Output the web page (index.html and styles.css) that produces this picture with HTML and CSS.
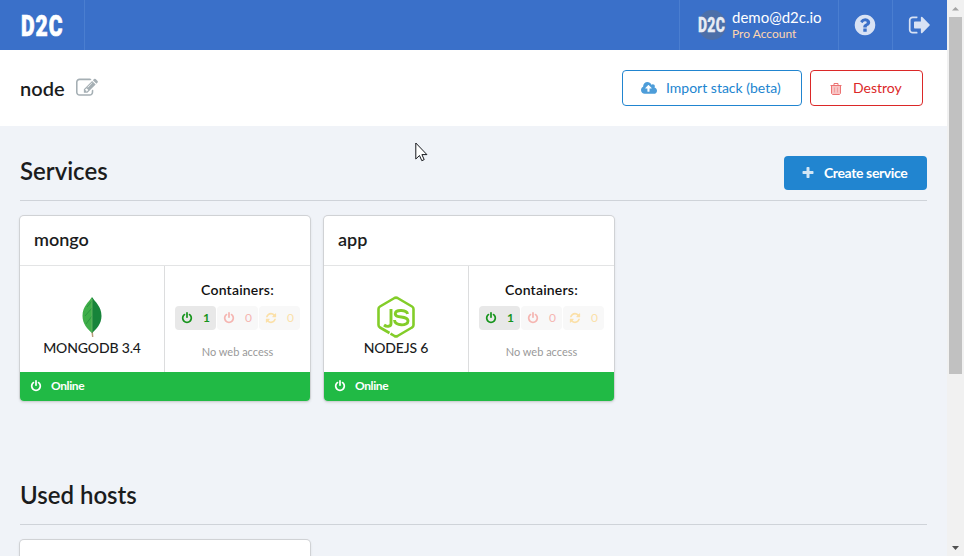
FILE: index.html
```html
<!DOCTYPE html>
<html lang="en">
<head>
<meta charset="utf-8">
<title>node - D2C</title>
<link rel="stylesheet" href="styles.css">
</head>
<body>
<svg class="defs" aria-hidden="true">
  <symbol id="power" viewBox="0 0 1792 1792"><path d="M1664 896q0 156-61 298t-164 245-245 164-298 61-298-61-245-164-164-245-61-298q0-182 80.5-343t226.5-270q43-32 95.5-25t83.5 50q32 42 24.5 94.5t-49.5 84.5q-98 74-151.5 181t-53.5 228q0 104 40.5 198.5t109.5 163.5 163.5 109.5 198.5 40.5 198.5-40.5 163.5-109.5 109.5-163.5 40.5-198.5q0-121-53.5-228t-151.5-181q-42-32-49.5-84.5t24.5-94.5q31-43 84-50t95 25q146 109 226.5 270t80.5 343zm-640-768v640q0 52-38 90t-90 38-90-38-38-90v-640q0-52 38-90t90-38 90 38 38 90z"/></symbol>
  <symbol id="refresh" viewBox="0 0 1792 1792"><path d="M1639 1056q0 5-1 7-64 268-268 434.500t-478 166.500q-146 0-282.500-55t-243.500-157l-129 129q-19 19-45 19t-45-19-19-45v-448q0-26 19-45t45-19h448q26 0 45 19t19 45-19 45l-137 137q71 66 161 102t187 36q134 0 250-65t186-179q11-17 53-117 8-23 30-23h192q13 0 22.500 9.500t9.500 22.500zm25-800v448q0 26-19 45t-45 19h-448q-26 0-45-19t-19-45 19-45l138-138q-148-137-349-137-134 0-250 65t-186 179q-11 17-53 117-8 23-30 23h-199q-13 0-22.500-9.500t-9.500-22.500v-7q65-268 270-434.500t480-166.500q146 0 284 55.500t245 156.500l130-129q19-19 45-19t45 19 19 45z"/></symbol>
</svg>
<div class="window">
  <div class="page">
    <header class="topbar">
      <div class="brand"><span class="logo">D2C</span></div>
      <div class="account">
        <div class="avatar"><span class="logo logo-small">D2C</span></div>
        <div class="who"><div class="email">demo@d2c.io</div><div class="plan">Pro Account</div></div>
      </div>
      <div class="tool help"><svg viewBox="0 0 1792 1792"><path d="M1024 1376v-192q0-14-9-23t-23-9h-192q-14 0-23 9t-9 23v192q0 14 9 23t23 9h192q14 0 23-9t9-23zm256-672q0-88-55.500-163t-138.500-116-170-41q-243 0-371 213-15 24 8 42l132 100q7 6 19 6 16 0 25-12 53-68 86-92 34-24 86-24 48 0 85.500 26t37.500 59q0 38-20 61t-68 45q-63 28-115.500 86.500t-52.500 125.500v36q0 14 9 23t23 9h192q14 0 23-9t9-23q0-19 21.500-49.500t54.500-49.500q32-18 49-28.500t46-35 44.500-48 28-60.500 12.500-81zm384 192q0 209-103 385.500t-279.500 279.500-385.500 103-385.500-103-279.500-279.500-103-385.500 103-385.500 279.500-279.500 385.500-103 385.500 103 279.500 279.500 103 385.500z"/></svg></div>
      <div class="tool exit"><svg viewBox="0 0 1792 1792"><path d="M704 1440q0 4 1 20t.5 26.500-3 23.500-10 19.500-20.500 6.500h-320q-119 0-203.500-84.500t-84.500-203.500v-704q0-119 84.500-203.500t203.500-84.500h320q13 0 22.500 9.500t9.500 22.500q0 4 1 20t.5 26.500-3 23.500-10 19.500-20.500 6.500h-320q-66 0-113 47t-47 113v704q0 66 47 113t113 47h312l11.500 1 11.500 3 8 5.500 7 9 2 13.500zm928-544q0 26-19 45l-544 544q-19 19-45 19t-45-19-19-45v-288h-448q-26 0-45-19t-19-45v-384q0-26 19-45t45-19h448v-288q0-26 19-45t45-19 45 19l544 544q19 19 19 45z"/></svg></div>
    </header>

    <div class="titlebar">
      <h1>node</h1>
      <svg class="edit" viewBox="0 0 1792 1792"><path d="M888 1184l116-116-152-152-116 116v56h96v96h56zm440-720q-16-16-33 1l-350 350q-17 17-1 33t33-1l350-350q17-17 1-33zm80 594v190q0 119-84.500 203.500t-203.500 84.500h-832q-119 0-203.500-84.500t-84.500-203.500v-832q0-119 84.500-203.500t203.500-84.500h832q63 0 117 25 15 7 18 23 3 17-9 29l-49 49q-14 14-32 8-23-6-45-6h-832q-66 0-113 47t-47 113v832q0 66 47 113t113 47h832q66 0 113-47t47-113v-126q0-13 9-22l64-64q15-15 35-7t20 29zm-96-738l288 288-672 672h-288v-288zm444 132l-92 92-288-288 92-92q28-28 68-28t68 28l152 152q28 28 28 68t-28 68z"/></svg>
      <button class="btn import"><svg viewBox="0 0 1920 1792"><path d="M1280 864q0-14-9-23l-352-352q-9-9-23-9t-23 9l-351 351q-10 12-10 24 0 14 9 23t23 9h224v352q0 13 9.500 22.500t22.500 9.500h192q13 0 22.500-9.500t9.500-22.500v-352h224q13 0 22.500-9.500t9.500-22.500zm640 288q0 159-112.500 271.500t-271.500 112.500h-1088q-185 0-316.500-131.500t-131.500-316.500q0-130 70-240t188-165q-2-30-2-43 0-212 150-362t362-150q156 0 285.500 87t188.500 231q71-62 166-62 106 0 181 75t75 181q0 76-41 138 130 31 213.500 135.500t83.500 238.500z"/></svg><span>Import stack (beta)</span></button>
      <button class="btn destroy"><svg viewBox="0 0 12 13"><path class="bin" d="M2 4h8v8H2z"/><path class="rim" d="M.5 3.500h11M4 3V1.500h4V3M1.500 4v7.500l1 1h7l1-1V4"/><path class="slats" d="M4.500 5.500v5M7.500 5.500v5"/></svg><span>Destroy</span></button>
    </div>

    <main>
      <section class="services">
        <div class="section-head">
          <h2>Services</h2>
          <button class="btn create"><svg viewBox="0 0 1792 1792"><path d="M1600 736v192q0 40-28 68t-68 28h-416v416q0 40-28 68t-68 28h-192q-40 0-68-28t-28-68v-416h-416q-40 0-68-28t-28-68v-192q0-40 28-68t68-28h416v-416q0-40 28-68t68-28h192q40 0 68 28t28 68v416h416q40 0 68 28t28 68z"/></svg><span>Create service</span></button>
        </div>
        <div class="cards">
          <article class="card">
            <h3>mongo</h3>
            <div class="card-body">
              <div class="kind">
                <svg class="mongo" viewBox="0 0 20 42"><path d="M9.300 35h1.600l.5 6h-1.400z" fill="#b89b78"/><path d="M10 1C7 6 .5 10 .5 20c0 8 5 13 9.500 17z" fill="#3fae49"/><path d="M10 1c3 5 9.500 9 9.500 19 0 8-5 13-9.500 17z" fill="#17843a"/><path d="M10 5L5 11M10 12l-7 8M10 20l-6 8" stroke="#2a9640" fill="none"/><path d="M10 3v33" stroke="#6cb66b" stroke-width=".8"/></svg>
                <div>MONGODB 3.4</div>
              </div>
              <div class="info">
                <div class="label">Containers:</div>
                <div class="counts">
                  <span class="count on"><svg><use href="#power"/></svg>1</span>
                  <span class="count off"><svg><use href="#power"/></svg>0</span>
                  <span class="count sync"><svg><use href="#refresh"/></svg>0</span>
                </div>
                <div class="access">No web access</div>
              </div>
            </div>
            <div class="status"><svg><use href="#power"/></svg>Online</div>
          </article>
          <article class="card">
            <h3>app</h3>
            <div class="card-body">
              <div class="kind">
                <svg class="node" viewBox="0 0 38 42"><g fill="none" stroke="#83cd29"><path stroke-width="2.600" stroke-linejoin="round" d="M12.500 37L3 31.500Q1.500 30.700 1.500 29V13q0-1.600 1.500-2.500L17.500 2q1.500-.8 3 0L35 10.500q1.500.9 1.500 2.500v16q0 1.700-1.500 2.500L20.500 40q-1.500.8-3 0l-4-2.400"/><path stroke-width="2.900" d="M13.500 13v14.500c0 3.500-4.500 3.500-7 1.500" transform="translate(.5)"/><path stroke-width="2.900" d="M30 18c-.5-4-11.500-5-12.200-.5-.6 5.500 12.700 1.500 12.700 7.500 0 5.500-13.500 5-13.500-1" transform="translate(.5)"/></g></svg>
                <div>NODEJS 6</div>
              </div>
              <div class="info">
                <div class="label">Containers:</div>
                <div class="counts">
                  <span class="count on"><svg><use href="#power"/></svg>1</span>
                  <span class="count off"><svg><use href="#power"/></svg>0</span>
                  <span class="count sync"><svg><use href="#refresh"/></svg>0</span>
                </div>
                <div class="access">No web access</div>
              </div>
            </div>
            <div class="status"><svg><use href="#power"/></svg>Online</div>
          </article>
        </div>
      </section>
      <section class="hosts">
        <div class="section-head"><h2>Used hosts</h2></div>
        <div class="cards"><article class="card"></article></div>
      </section>
    </main>
  </div>
  <div class="scrollbar">
    <svg viewBox="0 0 17 17"><path d="M5 10.500h7L8.500 7z" fill="#a3a3a3"/></svg>
    <div class="thumb"></div>
    <svg viewBox="0 0 17 17"><path d="M5 7h7l-3.500 4z" fill="#505050"/></svg>
  </div>
</div>
<svg class="cursor" viewBox="0 0 13 20"><path d="M.8 1v16l3.700-3.500 2.300 5.200 2.400-1.100-2.300-5h5z" fill="#fff" stroke="#16181d" stroke-width="1"/></svg>
</body>
</html>
```
FILE: styles.css
```css
* { box-sizing: border-box; }
body { margin: 0; font: 14px/20px Lato, sans-serif; color: #1b1c1d; overflow: hidden; }
h1, h2, h3 { margin: 0; font-weight: 600; }
svg { fill: currentColor; flex: none; display: block; }
.defs { display: none; }
.window { display: flex; height: 556px; overflow: hidden; }
.page { width: 947px; background: #f0f3f8; overflow: hidden; }

.topbar { display: flex; height: 50px; background: #3a70c9; color: #fff; }
.brand { width: 85px; border-right: 1px solid #4a7ed0; display: flex; align-items: center; padding: 2px 0 0 21px; margin-right: auto; }
.logo { font: 900 21px/24px Roboto, sans-serif; display: block; transform: scaleY(1.38); transform-origin: 0 50%; letter-spacing: 1px; -webkit-text-stroke: .5px; }
.account { width: 159px; border-left: 1px solid #4a7ed0; display: flex; padding: 10px 0 0 18px; }
.avatar { width: 28px; height: 30px; border-radius: 50%; background: #4c6fa8; display: flex; align-items: center; margin-right: 6px; }
.logo-small { font-size: 14px; color: #e7ecf5; letter-spacing: .3px; -webkit-text-stroke: .2px; }
.email { font-size: 15px; line-height: 16px; margin-top: -1px; }
.plan { font-size: 12px; line-height: 18px; color: #ffd6ae; }
.tool { width: 54px; border-left: 1px solid #4a7ed0; display: flex; align-items: center; padding-left: 14px; color: #d8e2f4; }
.exit { width: 55px; padding-left: 15px; }
.tool svg { width: 24px; height: 24px; }

.titlebar { display: flex; align-items: center; height: 76px; padding: 0 24px 0 20px; background: #fff; }
h1 { font-size: 20px; width: 45px; }
.edit { width: 22px; height: 22px; margin-left: 11px; margin-right: auto; color: #a5afb4; }
.btn { display: flex; align-items: center; height: 36px; border: 1px solid; border-radius: 4px; background: #fff; font: 14px/20px Lato, sans-serif; padding: 0; }
.import { width: 180px; color: #2185d0; padding-left: 18px; margin-right: 8px; }
.import svg { width: 16px; height: 15px; margin-right: 9px; opacity: .8; }
.destroy { width: 113px; color: #db2828; padding-left: 19px; }
.destroy svg { width: 12px; height: 13px; margin-right: 11px; }
.bin { fill: #f8c4c4; }
.rim { fill: none; stroke: #ec7272; }
.slats { fill: none; stroke: #f2a0a0; }

main { padding: 30px 20px 0; }
.section-head { display: flex; justify-content: space-between; height: 45px; border-bottom: 1px solid #cfd3d9; }
h2 { font-size: 24px; line-height: 30px; }
.create { width: 143px; height: 34px; background: #2185d0; border: 0; color: #fff; font-weight: 700; padding-left: 17px; letter-spacing: -.38px; }
.create svg { width: 14px; height: 14px; margin-right: 9px; opacity: .8; }
.cards { display: flex; gap: 14px; margin-top: 15px; }
.card { width: 290px; height: 185px; background: #fff; border-radius: 4px; box-shadow: 0 0 0 1px #d0d2d5, 0 1px 3px #c5c8cc; overflow: hidden; }
h3 { height: 50px; padding: 12px 14px; font-size: 18px; line-height: 22px; border-bottom: 1px solid #e3e4e5; }
.card-body { display: flex; height: 106px; }
.kind { width: 145px; border-right: 1px solid #dcddde; text-align: center; padding-top: 30px; }
.kind div { line-height: 20px; font-size: 14px; font-weight: 500; letter-spacing: -.15px; }
.kind svg { width: 38px; height: 42px; margin: 0 auto; }
.info { flex: 1; text-align: center; padding-top: 14px; }
.label { font-weight: 600; color: #111; letter-spacing: .2px; }
.counts { display: flex; gap: 1px; justify-content: center; margin-top: 6px; }
.count { width: 41px; height: 24px; border-radius: 4px; background: #f8f8f8; display: flex; align-items: center; padding-left: 6px; font-size: 12px; }
.count svg { width: 12px; height: 12px; margin-right: 10px; }
.on { background: #e8e8e8; color: #16941c; font-weight: 700; }
.off { color: #f5b5b1; }
.sync { color: #fbe0a8; }
.access { font-size: 11px; line-height: 16px; color: #999; margin-top: 14px; }
.status { height: 29px; background: #21ba45; color: #fff; font-size: 12px; font-weight: 700; display: flex; align-items: center; padding: 0 0 2px 10px; letter-spacing: -.4px; }
.status svg { width: 12px; height: 12px; margin-right: 9px; }
.hosts { margin-top: 79px; }

.scrollbar { width: 17px; height: 556px; background: #f1f1f1; display: flex; flex-direction: column; }
.scrollbar svg { width: 17px; height: 17px; }
.thumb { width: 13px; height: 357px; margin: 0 2px auto; background: #c1c1c1; }
.cursor { position: absolute; left: 415px; top: 142px; width: 13px; height: 20px; }
```
